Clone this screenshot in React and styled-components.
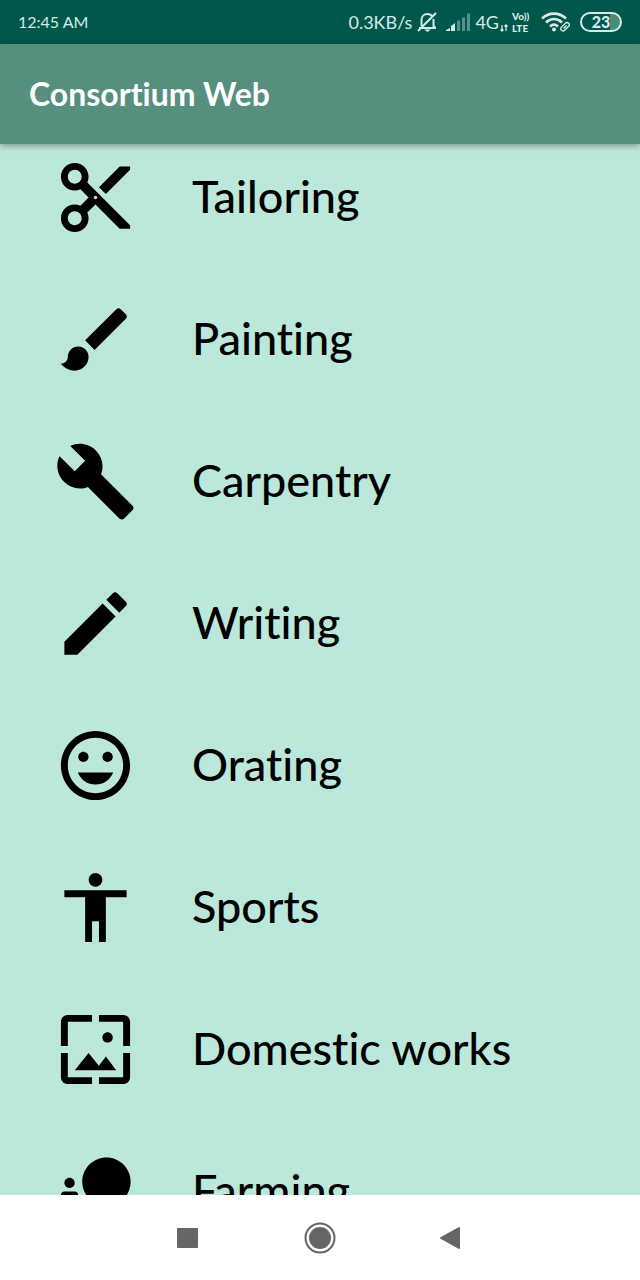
import React from "react";
import styled, { createGlobalStyle } from "styled-components";
import { MdContentCut, MdBrush, MdBuild, MdCreate, MdMood, MdWallpaper, MdNaturePeople } from "react-icons/md";

const GlobalStyle = createGlobalStyle`
  * { box-sizing: border-box; }
  body {
    margin: 0;
    background: #bbe8da;
    font-family: Lato, "Liberation Sans", sans-serif;
    font-variant-ligatures: none;
  }
`;

const Screen = styled.div`
  display: flex;
  flex-direction: column;
  height: 100vh;
  background: #bbe8da;
  overflow: hidden;
`;

const StatusBar = styled.div`
  display: flex;
  flex: none;
  align-items: center;
  justify-content: space-between;
  height: 44px;
  padding: 0 18px;
  background: #00574b;
  color: #d5ebe5;
  font-size: 18px;
  line-height: 24px;
`;

const Clock = styled.span`
  font-size: 16px;
`;

const StatusGroup = styled.div`
  display: flex;
  align-items: center;
`;

const StatusIcon = styled.svg`
  display: block;
  flex: none;
  margin-left: ${(p) => p.$gap}px;
`;

const Network = styled.span`
  display: flex;
  align-items: center;
  margin-left: 4px;
`;

const Volte = styled.span`
  display: flex;
  flex-direction: column;
  width: 22px;
  margin-left: 4px;
  font-size: 10px;
  font-weight: 900;
  line-height: 12px;
`;

const Battery = styled.span`
  width: 42px;
  height: 20px;
  margin-left: 10px;
  border: 2px solid #d5ebe5;
  border-radius: 10px;
  background: linear-gradient(to right, transparent 74%, #4a8b80 74%);
  font-size: 16px;
  font-weight: 900;
  line-height: 16px;
  text-align: center;
`;

const AppBar = styled.header`
  display: flex;
  flex: none;
  align-items: center;
  height: 100px;
  padding: 0 29px;
  background: #578f7e;
  box-shadow: 0 2px 6px rgba(0, 0, 0, 0.35);
  z-index: 1;
`;

const Title = styled.h1`
  margin: 0;
  color: #fff;
  font-size: 32px;
  font-weight: 700;
  line-height: 44px;
`;

const List = styled.ul`
  display: flex;
  flex: 1;
  flex-direction: column;
  gap: 59px;
  min-height: 0;
  margin: 0;
  padding: 12px 54px 0;
  overflow: hidden;
  list-style: none;
`;

const Row = styled.a`
  display: flex;
  align-items: center;
  gap: 55px;
  height: 83px;
  color: #000;
  text-decoration: none;

  svg {
    flex: none;
    width: 83px;
    height: 83px;
  }
`;

const Label = styled.span`
  padding-bottom: 4px;
  font-size: 45px;
  font-weight: 500;
  line-height: 56px;
  white-space: nowrap;
`;

const NavBar = styled.nav`
  display: flex;
  flex: none;
  align-items: center;
  justify-content: center;
  gap: 84px;
  height: 85px;
  background: #fff;
`;

const NavButton = styled.button`
  display: flex;
  align-items: center;
  justify-content: center;
  width: 48px;
  height: 48px;
  padding: 0;
  border: 0;
  background: none;
`;

const Person = () => (
  <svg viewBox="0 0 24 24" fill="currentColor" aria-hidden="true">
    <circle cx="12" cy="4" r="2" />
    <path d="M21 9h-6v13h-2v-6h-2v6H9V9H3V7h18z" />
  </svg>
);

const skills = [
  ["Tailoring", MdContentCut],
  ["Painting", MdBrush],
  ["Carpentry", MdBuild],
  ["Writing", MdCreate],
  ["Orating", MdMood],
  ["Sports", Person],
  ["Domestic works", MdWallpaper],
  ["Farming", MdNaturePeople],
];

export default function App() {
  return (
    <Screen>
      <GlobalStyle />
      <StatusBar>
        <Clock>12:45 AM</Clock>
        <StatusGroup>
          <span>0.3KB/s</span>
          <StatusIcon $gap={5} width="21" height="22" viewBox="0 0 21 22" fill="none" stroke="currentColor" strokeWidth="2">
            <path d="M2 17h17M4.500 15V9c0-3.500 2.500-6 6-6 2 0 3.500.8 4.600 2M16.500 8v7l2 2M1 20 19 2" />
            <path d="M7 18.500h7L10.500 21z" fill="currentColor" stroke="none" />
          </StatusIcon>
          <StatusIcon $gap={8} width="25" height="18" viewBox="0 0 25 18" fill="currentColor">
            <path d="M0 17l4-2v3H0zM5 13l4-3v8H5z" />
            <path d="M11 8l3-1v11h-3zM16 5l3-1v14h-3zM21 1l3-1v18h-3z" opacity=".4" />
          </StatusIcon>
          <Network>
            4G
            <StatusIcon $gap={1} width="8" height="22" viewBox="0 0 8 22" fill="none" stroke="currentColor" strokeWidth="1.300">
              <path d="M2 14v6M.5 18.500 2 20l1.500-1.500M6 20v-6M4.500 15.500 6 14l1.500 1.500" />
            </StatusIcon>
          </Network>
          <Volte>
            <span>Vo))</span>
            <span>LTE</span>
          </Volte>
          <StatusIcon $gap={7} width="29" height="20" viewBox="0 0 29 20" fill="none" stroke="currentColor" strokeWidth="2.600">
            <path d="M1 6.500c7-6.500 17-6.500 24 0M5 10.500c5-4.500 11-4.500 16 0M9 14.500c2.500-2.300 5.500-2.300 8 0" />
            <circle cx="13" cy="17.500" r="2" fill="currentColor" stroke="none" />
            <g stroke="#00574b" strokeWidth="4">
              <rect x="20" y="12.500" width="9" height="4" rx="2" transform="rotate(-45 24.500 14.500)" />
            </g>
            <g strokeWidth="1.400">
              <rect x="19" y="12.500" width="10" height="4.500" rx="2.200" transform="rotate(-45 24 14.700)" />
              <path d="m22.500 16.500 3-3" />
            </g>
          </StatusIcon>
          <Battery>23</Battery>
        </StatusGroup>
      </StatusBar>
      <AppBar>
        <Title>Consortium Web</Title>
      </AppBar>
      <List>
        {skills.map(([name, Icon]) => (
          <li key={name}>
            <Row href="#">
              <Icon />
              <Label>{name}</Label>
            </Row>
          </li>
        ))}
      </List>
      <NavBar>
        <NavButton aria-label="Recent apps">
          <svg width="24" height="22" fill="#666"><rect x="1" y="1" width="21" height="20" rx="1" /></svg>
        </NavButton>
        <NavButton aria-label="Home">
          <svg width="32" height="32" fill="#666">
            <circle cx="16" cy="16" r="14.500" fill="none" stroke="#666" strokeWidth="2" />
            <circle cx="16" cy="16" r="11" />
          </svg>
        </NavButton>
        <NavButton aria-label="Back">
          <svg width="26" height="24" fill="#666" stroke="#666" strokeWidth="2" strokeLinejoin="round"><path d="M20 2v20L2 12z" /></svg>
        </NavButton>
      </NavBar>
    </Screen>
  );
}
